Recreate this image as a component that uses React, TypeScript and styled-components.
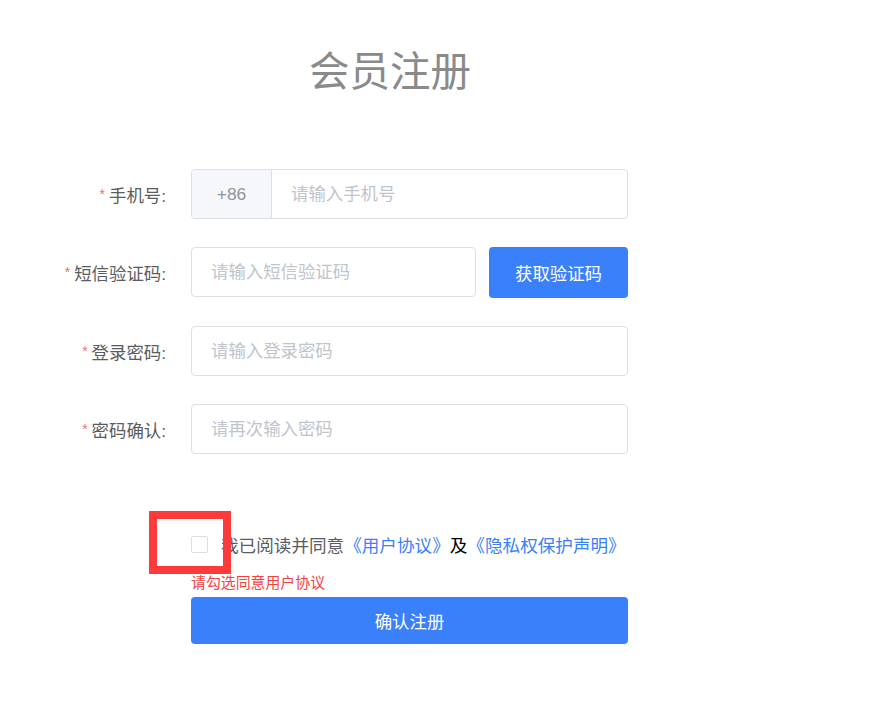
import React from "react";
import styled, { createGlobalStyle } from "styled-components";

const Global = createGlobalStyle`
  html, body { margin: 0; padding: 0; background: #fff; }
  body { font-family: "Liberation Sans", "Noto Sans CJK SC", sans-serif; }
  * { box-sizing: border-box; }
`;

const Page = styled.div`
  width: 780px;
  padding-top: 44px;
`;

const Title = styled.h1`
  margin: 0;
  text-align: center;
  font-size: 40.5px;
  line-height: 56px;
  font-weight: 400;
  color: #8a8a8a;
`;

const Form = styled.form`
  margin-top: 69px;
  display: flex;
  flex-direction: column;
  gap: 28px;
`;

const Row = styled.div`
  display: flex;
  align-items: center;
  gap: 12px;
`;

const Label = styled.label`
  width: 179px;
  padding-right: 13px;
  text-align: right;
  font-size: 17.4px;
  color: #5a5c61;
  white-space: nowrap;
`;

const Star = styled.span`
  color: #f56c6c;
  font-size: 14px;
  margin-right: 4px;
  vertical-align: 3px;
`;

const Control = styled.div<{ $w?: number }>`
  width: ${(p) => p.$w ?? 437}px;
  height: 50px;
  display: flex;
  border: 1px solid #dcdfe6;
  border-radius: 4px;
  overflow: hidden;
  background: #fff;
`;

const Prefix = styled.div`
  width: 80px;
  flex: none;
  display: flex;
  align-items: center;
  justify-content: center;
  background: #f5f7fa;
  border-right: 1px solid #dcdfe6;
  color: #909399;
  font-size: 17.4px;
`;

const Input = styled.input`
  flex: 1;
  min-width: 0;
  border: none;
  outline: none;
  padding: 0 19px;
  font-family: inherit;
  font-size: 17.4px;
  color: #606266;
  background: transparent;
  &::placeholder { color: #c0c4cc; }
`;

const Controls = styled.div`
  display: flex;
  gap: 13px;
`;

const PrimaryButton = styled.button<{ $w: number; $h: number }>`
  width: ${(p) => p.$w}px;
  height: ${(p) => p.$h}px;
  border: none;
  border-radius: 4px;
  background: #3b80fb;
  color: #fff;
  font-family: inherit;
  font-size: 17.4px;
  cursor: pointer;
  padding: 0;
`;

const Bottom = styled.div`
  margin-left: 191px;
  margin-top: 75px;
  display: flex;
  flex-direction: column;
`;

const Agree = styled.div`
  height: 30px;
  display: flex;
  align-items: center;
  gap: 13px;
  font-size: 17.6px;
  color: #5a5c61;
  white-space: nowrap;
`;

const CheckWrap = styled.span`
  position: relative;
  width: 17px;
  height: 17px;
  flex: none;
`;

const Check = styled.span`
  display: block;
  width: 17px;
  height: 17px;
  border: 1px solid #dcdfe6;
  border-radius: 2px;
  background: #fff;
`;

const Highlight = styled.span`
  position: absolute;
  left: -42px;
  top: -25px;
  width: 82px;
  height: 63px;
  border: 8px solid #fe3b3b;
  pointer-events: none;
`;

const Link = styled.a`
  color: #3b80fb;
  text-decoration: none;
`;

const And = styled.span`
  color: #000;
`;

const Error = styled.div`
  margin-top: 15px;
  font-size: 14.9px;
  line-height: 18px;
  color: #f5423f;
`;

const SubmitWrap = styled.div`
  margin-top: 5px;
`;

export default function App() {
  return (
    <>
      <Global />
      <Page>
        <Title>会员注册</Title>
        <Form onSubmit={(e) => e.preventDefault()}>
          <Row>
            <Label><Star>*</Star>手机号:</Label>
            <Control>
              <Prefix>+86</Prefix>
              <Input placeholder="请输入手机号" />
            </Control>
          </Row>
          <Row>
            <Label><Star>*</Star>短信验证码:</Label>
            <Controls>
              <Control $w={285}>
                <Input placeholder="请输入短信验证码" />
              </Control>
              <PrimaryButton type="button" $w={139} $h={51}>获取验证码</PrimaryButton>
            </Controls>
          </Row>
          <Row>
            <Label><Star>*</Star>登录密码:</Label>
            <Control>
              <Input type="password" placeholder="请输入登录密码" />
            </Control>
          </Row>
          <Row>
            <Label><Star>*</Star>密码确认:</Label>
            <Control>
              <Input type="password" placeholder="请再次输入密码" />
            </Control>
          </Row>
        </Form>
        <Bottom>
          <Agree>
            <CheckWrap>
              <Check />
              <Highlight />
            </CheckWrap>
            <span>
              我已阅读并同意<Link href="#">《用户协议》</Link><And>及</And><Link href="#">《隐私权保护声明》</Link>
            </span>
          </Agree>
          <Error>请勾选同意用户协议</Error>
          <SubmitWrap>
            <PrimaryButton type="button" $w={437} $h={47}>确认注册</PrimaryButton>
          </SubmitWrap>
        </Bottom>
      </Page>
    </>
  );
}
